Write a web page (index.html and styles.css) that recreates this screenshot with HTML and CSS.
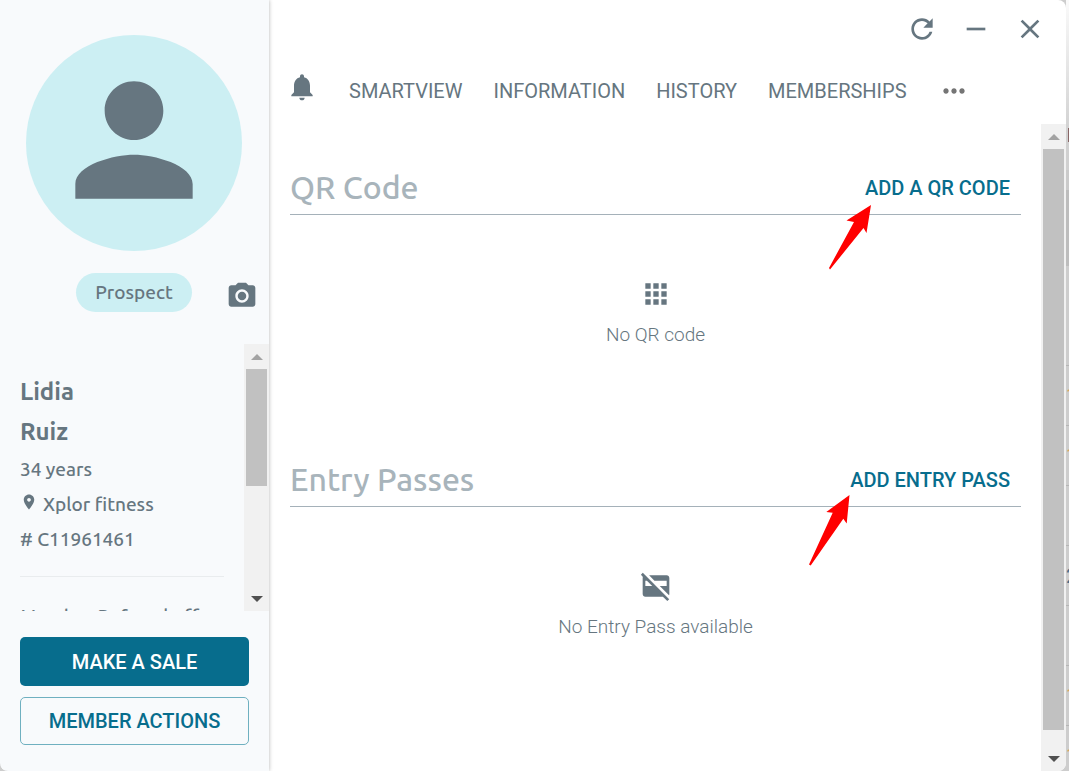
FILE: index.html
```
<!DOCTYPE html>
<html lang="en">
<head>
<meta charset="utf-8">
<meta name="viewport" content="width=device-width, initial-scale=1">
<title>Lidia Ruiz</title>
<link rel="stylesheet" href="styles.css">
</head>
<body>
<div class="screen">
  <div class="dialog">
    <aside class="sidebar">
      <div class="profile">
        <div class="avatar">
          <svg class="avatar-icon" viewBox="0 0 24 24" aria-hidden="true"><path d="M12 12c2.21 0 4-1.79 4-4s-1.79-4-4-4-4 1.79-4 4 1.79 4 4 4zm0 2c-2.67 0-8 1.34-8 4v2h16v-2c0-2.66-5.33-4-8-4z"/></svg>
        </div>
        <div class="status-row">
          <span class="badge">Prospect</span>
          <button class="icon-button" type="button" aria-label="Change photo">
            <svg class="icon" viewBox="0 0 24 24"><circle cx="12" cy="12" r="3.2"/><path d="M9 2L7.17 4H4c-1.1 0-2 .9-2 2v12c0 1.1.9 2 2 2h16c1.1 0 2-.9 2-2V6c0-1.1-.9-2-2-2h-3.17L15 2H9zm3 15c-2.76 0-5-2.24-5-5s2.24-5 5-5 5 2.24 5 5-2.24 5-5 5z"/></svg>
          </button>
        </div>
      </div>
      <div class="details">
        <div class="details-body">
          <h1 class="name">Lidia<br>Ruiz</h1>
          <p class="fact">34 years</p>
          <p class="fact"><svg class="pin" viewBox="0 0 24 24" aria-hidden="true"><path d="M12 2C8.13 2 5 5.13 5 9c0 5.25 7 13 7 13s7-7.75 7-13c0-3.87-3.13-7-7-7zm0 9.5c-1.38 0-2.5-1.12-2.5-2.5s1.12-2.5 2.5-2.5 2.5 1.12 2.5 2.5-1.12 2.5-2.5 2.5z"/></svg>Xplor fitness</p>
          <p class="fact"># C11961461</p>
          <hr class="divider">
          <p class="fact">Member Referral off</p>
        </div>
        <div class="scrollbar" aria-hidden="true">
          <span class="scroll-arrow up"></span>
          <div class="scroll-track"><div class="thumb thumb-half"></div></div>
          <span class="scroll-arrow down"></span>
        </div>
      </div>
      <div class="actions">
        <button class="button primary" type="button">MAKE A SALE</button>
        <button class="button outlined" type="button">MEMBER ACTIONS</button>
      </div>
    </aside>
    <main class="main">
      <div class="window-controls">
        <button class="icon-button" type="button" aria-label="Refresh"><svg class="icon" viewBox="0 0 24 24"><path d="M17.65 6.35C16.2 4.9 14.21 4 12 4c-4.42 0-7.99 3.58-7.99 8s3.57 8 7.99 8c3.73 0 6.84-2.55 7.73-6h-2.08c-.82 2.33-3.04 4-5.65 4-3.31 0-6-2.69-6-6s2.69-6 6-6c1.66 0 3.14.69 4.22 1.78L13 11h7V4l-2.35 2.35z"/></svg></button>
        <button class="icon-button" type="button" aria-label="Minimize"><svg class="icon" viewBox="0 0 24 24"><path d="M19 13H5v-2h14v2z"/></svg></button>
        <button class="icon-button" type="button" aria-label="Close"><svg class="icon" viewBox="0 0 24 24"><path d="M19 6.41L17.59 5 12 10.59 6.41 5 5 6.41 10.59 12 5 17.59 6.41 19 12 13.41 17.59 19 19 17.59 13.41 12z"/></svg></button>
      </div>
      <nav class="tabs">
        <button class="icon-button bell" type="button" aria-label="Notifications"><svg class="icon" viewBox="0 0 24 24"><path d="M12 22c1.1 0 2-.9 2-2h-4c0 1.1.9 2 2 2zm6-6v-5c0-3.07-1.63-5.64-4.5-6.32V4c0-.83-.67-1.5-1.5-1.5s-1.5.67-1.5 1.5v.68C7.64 5.36 6 7.92 6 11v5l-2 2v1h16v-1l-2-2z"/></svg></button>
        <a class="tab" href="#">SMARTVIEW</a>
        <a class="tab" href="#">INFORMATION</a>
        <a class="tab" href="#">HISTORY</a>
        <a class="tab" href="#">MEMBERSHIPS</a>
        <button class="icon-button more" type="button" aria-label="More"><svg class="icon" viewBox="0 0 24 24"><path d="M6 10c-1.1 0-2 .9-2 2s.9 2 2 2 2-.9 2-2-.9-2-2-2zm12 0c-1.1 0-2 .9-2 2s.9 2 2 2 2-.9 2-2-.9-2-2-2zm-6 0c-1.1 0-2 .9-2 2s.9 2 2 2 2-.9 2-2-.9-2-2-2z"/></svg></button>
      </nav>
      <div class="content">
        <div class="content-body">
          <section class="section">
            <header class="section-head">
              <h2 class="section-title">QR Code</h2>
              <button class="text-button" type="button">ADD A QR CODE</button>
              <svg class="arrow arrow-qr" viewBox="0 0 44 66" aria-hidden="true"><path d="M43 1L38.500 29 35.500 24 2 65.500 1 64 26 18 18.500 16.500z"/></svg>
            </header>
            <div class="empty">
              <svg class="icon" viewBox="0 0 24 24" aria-hidden="true"><path d="M4 8h4V4H4v4zm6 12h4v-4h-4v4zm-6 0h4v-4H4v4zm0-6h4v-4H4v4zm6 0h4v-4h-4v4zm6-10v4h4V4h-4zm-6 4h4V4h-4v4zm6 6h4v-4h-4v4zm0 6h4v-4h-4v4z"/></svg>
              <p class="empty-text">No QR code</p>
            </div>
          </section>
          <section class="section">
            <header class="section-head">
              <h2 class="section-title">Entry Passes</h2>
              <button class="text-button" type="button">ADD ENTRY PASS</button>
              <svg class="arrow arrow-pass" viewBox="0 0 42 72" aria-hidden="true"><path d="M41.500 1L38.700 29.600 35.300 24.700 2.700 71.500 1 70.500 24.700 18.700 18.300 18z"/></svg>
            </header>
            <div class="empty">
              <svg class="icon" viewBox="0 0 24 24" aria-hidden="true"><path d="M6.83 4H20c1.1 0 2 .9 2 2v12c0 .34-.09.66-.23.94L14.83 12H20V8h-9.17z"/><path fill-rule="evenodd" d="M20.49 23.31L17.17 20H4c-1.1 0-2-.9-2-2V6c0-.3.06-.56.18-.8L.69 3.51 2.1 2.1l19.8 19.8zM4 12h5.17l-4-4H4z"/></svg>
              <p class="empty-text">No Entry Pass available</p>
            </div>
          </section>
        </div>
        <div class="scrollbar" aria-hidden="true">
          <span class="scroll-arrow up"></span>
          <div class="scroll-track"><div class="thumb thumb-long"></div></div>
          <span class="scroll-arrow down"></span>
        </div>
      </div>
    </main>
  </div>
  <div class="backdrop" aria-hidden="true">
    <div class="backdrop-top"><span class="backdrop-mark"></span></div>
    <div class="backdrop-band"></div>
    <div class="backdrop-filter"></div>
    <div class="backdrop-row">1</div>
    <div class="backdrop-row">1</div>
    <div class="backdrop-row"></div>
    <div class="backdrop-row blue">2</div>
    <div class="backdrop-row"></div>
    <div class="backdrop-row">1</div>
    <div class="backdrop-row">1</div>
  </div>
</div>
</body>
</html>
```
FILE: styles.css
```
* { box-sizing: border-box; }

body {
  margin: 0;
  font-family: Roboto, "Liberation Sans", sans-serif;
  font-size: 20px;
  color: #667680;
}

h1, h2, p { margin: 0; }

button {
  font: inherit;
  color: inherit;
  background: none;
  border: 0;
  padding: 0;
  cursor: pointer;
}

.screen {
  display: flex;
  height: 100vh;
  overflow: hidden;
  background: #cdcdcd;
}

.dialog {
  display: flex;
  flex: 1;
  min-width: 0;
  background: #fff;
  border-radius: 0 8px 8px 8px;
  overflow: hidden;
}

.icon {
  display: block;
  width: 32px;
  height: 32px;
  fill: #667680;
}

.icon-button { flex: none; }

/* Sidebar */

.sidebar {
  display: flex;
  flex-direction: column;
  flex: none;
  width: 269px;
  background: #f8fafc;
  box-shadow: 0 0 4px rgba(0, 0, 0, 0.3);
  font-family: Ubuntu, "Noto Sans", sans-serif;
  font-weight: 500;
  z-index: 1;
}

.profile { padding: 35px 11px 32px 26px; }

.avatar {
  display: flex;
  justify-content: center;
  width: 216px;
  height: 216px;
  padding-top: 17px;
  border-radius: 50%;
  background: #cceff3;
}

.avatar-icon {
  width: 176px;
  height: 176px;
  fill: #667680;
}

.status-row {
  display: flex;
  justify-content: space-between;
  align-items: flex-end;
  padding: 22px 0 0 50px;
}

.badge {
  width: 116px;
  border-radius: 20px;
  background: #cceff3;
  font-size: 19px;
  line-height: 39px;
  text-align: center;
}

.details {
  display: flex;
  flex: 1;
  min-height: 0;
  overflow: hidden;
}

.details-body {
  flex: 1;
  padding: 28px 20px 0 20px;
  overflow: hidden;
}

.name {
  font-size: 24px;
  font-weight: 600;
  line-height: 40px;
}

.fact {
  font-size: 19px;
  line-height: 35px;
}

.pin {
  width: 18px;
  height: 18px;
  margin-right: 5px;
  fill: #667680;
}

.divider {
  margin: 19px 0 22px;
  border: 0;
  border-top: 1px solid #e9ecee;
}

.actions {
  display: flex;
  flex-direction: column;
  gap: 11px;
  padding: 26px 20px;
}

.button {
  height: 48px;
  border-radius: 5px;
  font-family: Roboto, "Liberation Sans", sans-serif;
  font-weight: 500;
}

.primary {
  height: 49px;
  background: #076d8d;
  color: #fff;
}

.outlined {
  border: 1px solid #6fb0c0;
  color: #076d8d;
}

/* Scrollbars */

.scrollbar {
  display: flex;
  flex-direction: column;
  flex: none;
  width: 25px;
  background: #f1f1f1;
}

.scroll-arrow {
  display: flex;
  flex: none;
  align-items: center;
  justify-content: center;
  height: 25px;
}

.scroll-arrow::before {
  content: "";
  border: 6px solid transparent;
}

.up::before {
  border-top: 0;
  border-bottom-color: #a3a3a3;
}

.down::before {
  border-bottom: 0;
  border-top-color: #505050;
}

.scroll-track {
  flex: 1;
  padding: 0 2px;
}

.thumb { background: #c1c1c1; }
.thumb-half { height: 54%; }
.thumb-long { height: calc(100% - 16px); }

/* Main pane */

.main {
  display: flex;
  flex: 1;
  flex-direction: column;
  min-width: 0;
}

.window-controls {
  display: flex;
  justify-content: flex-end;
  gap: 22px;
  padding: 13px 20px 0;
}

.tabs {
  display: flex;
  align-items: center;
  gap: 31px;
  height: 40px;
  margin: 26px 17px 13px;
}

.bell { align-self: flex-start; }

.tab {
  color: inherit;
  text-decoration: none;
}

.more .icon { fill: #757575; }

.content {
  display: flex;
  flex: 1;
  min-height: 0;
}

.content-body {
  flex: 1;
  padding: 38px 20px 0 21px;
}

.section { height: 292px; }

.section-head {
  position: relative;
  display: flex;
  align-items: center;
  justify-content: space-between;
  height: 53px;
  padding-right: 11px;
  border-bottom: 1px solid #a5b1b9;
}

.section-title {
  padding-bottom: 2px;
  font-family: Ubuntu, "Noto Sans", sans-serif;
  font-size: 32px;
  font-weight: 500;
  line-height: 40px;
  color: #a8b4bb;
}

.text-button {
  font-weight: 500;
  color: #076d8d;
}

.arrow {
  position: absolute;
  fill: #f00;
}

.arrow-qr {
  top: calc(100% - 10px);
  right: 149px;
  width: 44px;
  height: 66px;
}

.arrow-pass {
  top: calc(100% - 12px);
  right: 171px;
  width: 42px;
  height: 72px;
}

.empty {
  display: flex;
  flex-direction: column;
  align-items: center;
  gap: 13px;
  padding-top: 63px;
}

.empty-text {
  font-size: 19px;
  font-weight: 300;
  line-height: 24px;
}

/* Page seen behind the dialog */

.backdrop {
  flex: none;
  width: 3px;
  overflow: hidden;
  color: #dba35f;
}

.backdrop-top {
  height: 170px;
  padding: 128px 0 0 2px;
  background: linear-gradient(#fafafa, #d0d0d0 80%);
}

.backdrop-mark {
  display: block;
  height: 14px;
  background: #866;
}

.backdrop-band {
  height: 96px;
  border-top: 20px solid #cacaca;
  background: #bdbdbd;
}

.backdrop-filter {
  height: 100px;
  border-bottom: 1px solid #b5b5b5;
}

.backdrop-row {
  height: 60px;
  border-bottom: 1px solid #b5b5b5;
  line-height: 60px;
}

.blue { color: #4c6c88; }
```
